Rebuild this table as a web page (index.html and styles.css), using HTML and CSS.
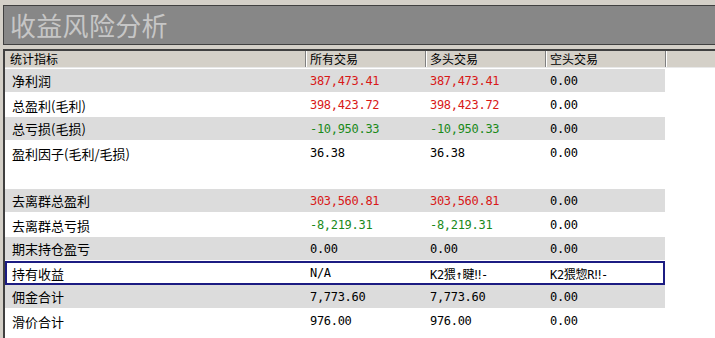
FILE: index.html
```html
<!DOCTYPE html>
<html lang="zh-CN">
<head>
<meta charset="utf-8">
<title>收益风险分析</title>
<link rel="stylesheet" href="styles.css">
</head>
<body>
<div class="title">收益风险分析</div>
<div class="panel">
  <div class="head">
    <div class="hc first">统计指标</div>
    <div class="hc">所有交易</div>
    <div class="hc">多头交易</div>
    <div class="hc">空头交易</div>
    <div class="hc rest"></div>
  </div>
  <div class="rows">
    <div class="row alt"><span class="lbl">净利润</span><span class="num red">387,473.41</span><span class="num red">387,473.41</span><span class="num">0.00</span></div>
    <div class="row"><span class="lbl">总盈利(毛利)</span><span class="num red">398,423.72</span><span class="num red">398,423.72</span><span class="num">0.00</span></div>
    <div class="row alt"><span class="lbl">总亏损(毛损)</span><span class="num green">-10,950.33</span><span class="num green">-10,950.33</span><span class="num">0.00</span></div>
    <div class="row"><span class="lbl">盈利因子(毛利/毛损)</span><span class="num">36.38</span><span class="num">36.38</span><span class="num">0.00</span></div>
    <div class="row"><span class="lbl"></span><span class="num"></span><span class="num"></span><span class="num"></span></div>
    <div class="row alt"><span class="lbl">去离群总盈利</span><span class="num red">303,560.81</span><span class="num red">303,560.81</span><span class="num">0.00</span></div>
    <div class="row"><span class="lbl">去离群总亏损</span><span class="num green">-8,219.31</span><span class="num green">-8,219.31</span><span class="num">0.00</span></div>
    <div class="row alt"><span class="lbl">期末持仓盈亏</span><span class="num">0.00</span><span class="num">0.00</span><span class="num">0.00</span></div>
    <div class="row sel"><span class="lbl">持有收益</span><span class="num">N/A</span><span class="num">K2猥↑睷‼-</span><span class="num">K2猥惣R‼-</span></div>
    <div class="row alt"><span class="lbl">佣金合计</span><span class="num">7,773.60</span><span class="num">7,773.60</span><span class="num">0.00</span></div>
    <div class="row"><span class="lbl">滑价合计</span><span class="num">976.00</span><span class="num">976.00</span><span class="num">0.00</span></div>
  </div>
</div>
</body>
</html>
```
FILE: styles.css
```css
html, body {
  margin: 0;
  padding: 0;
  background: #d4d0c8;
  height: 100%;
  overflow: hidden;
}
body {
  font-family: "Noto Sans CJK SC", "DejaVu Sans", sans-serif;
}
.title {
  margin: 5px 0 0 3px;
  height: 38px;
  border-top: 1px solid #404040;
  border-left: 1px solid #404040;
  border-bottom: 1px solid #404040;
  background: #878787;
  color: #c6c6c6;
  font-size: 26px;
  line-height: 38px;
  padding-left: 6px;
  letter-spacing: 0.3px;
}
.panel {
  margin: 4px 0 0 3px;
  border-top: 2px solid #404040;
  border-left: 2px solid #404040;
  background: #ffffff;
  height: 300px;
}
.head {
  display: flex;
  height: 16px;
  background: #d4d0c8;
  border-bottom: 1px solid #e8e8e8;
}
.hc {
  box-sizing: border-box;
  width: 120px;
  font-size: 12px;
  line-height: 16px;
  padding-left: 4px;
  color: #000;
  border-right: 1px solid #808080;
  box-shadow: 1px 0 0 #ffffff;
}
.hc.first {
  width: 301px;
  padding-left: 5px;
}
.hc.rest {
  flex: 1;
  border-right: none;
  box-shadow: none;
}
.rows {
  margin-top: 1px;
  width: 660px;
}
.row {
  box-sizing: border-box;
  display: grid;
  grid-template-columns: 301px 120px 120px 119px;
  height: 24px;
  align-items: center;
}
.row.alt {
  background: #dcdcdc;
  border-bottom: 1px solid #ffffff;
}
.row.sel {
  box-shadow: inset 0 0 0 2px #1c1c82;
}
.row > span {
  overflow: hidden;
  min-width: 0;
}
.lbl {
  font-size: 13px;
  padding-left: 7px;
  color: #000;
  white-space: nowrap;
}
.num {
  font-family: "DejaVu Sans Mono", "Noto Sans CJK SC", monospace;
  font-size: 12px;
  letter-spacing: -0.3px;
  padding-left: 4px;
  color: #000;
  white-space: nowrap;
}
.num.red { color: #d81818; }
.num.green { color: #1a8a1a; }
```
